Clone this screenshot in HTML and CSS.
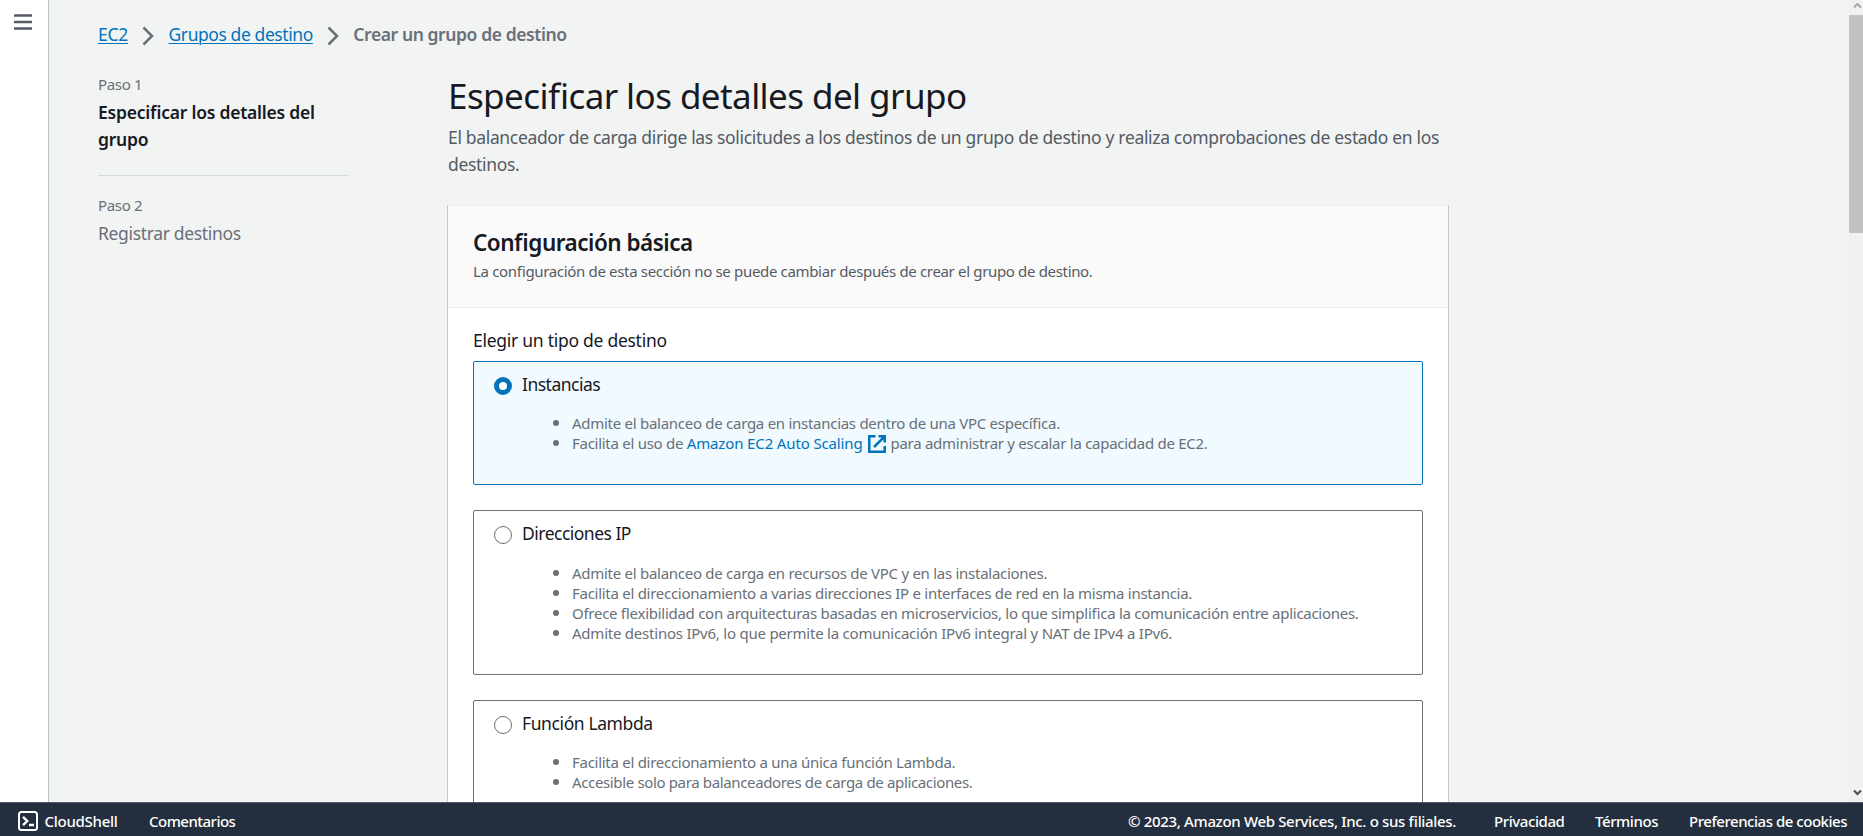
FILE: index.html
```html
<!DOCTYPE html>
<html lang="es">
<head>
<meta charset="utf-8">
<title>Crear un grupo de destino</title>
<link rel="stylesheet" href="styles.css">
</head>
<body>
<div class="workspace">
  <aside class="rail">
    <svg class="menu-icon" width="18" height="16" viewBox="0 0 18 16"><path d="M0 1.5h18M0 8h18M0 14.5h18" stroke="#545b64" stroke-width="2.3"/></svg>
  </aside>
  <main class="content">
    <nav class="breadcrumb">
      <a class="crumb-ec2" href="#">EC2</a>
      <svg class="chevron" width="12" height="20" viewBox="0 0 12 20"><path d="M1.5 1.5L10 10L1.5 18.5" fill="none" stroke="#687078" stroke-width="2.5"/></svg>
      <a class="crumb-groups" href="#">Grupos de destino</a>
      <svg class="chevron" width="12" height="20" viewBox="0 0 12 20"><path d="M1.5 1.5L10 10L1.5 18.5" fill="none" stroke="#687078" stroke-width="2.5"/></svg>
      <span class="current">Crear un grupo de destino</span>
    </nav>
    <div class="wizard">
      <ol class="steps">
        <li class="step active"><small>Paso 1</small><span>Especificar los detalles del grupo</span></li>
        <li class="step"><small>Paso 2</small><span>Registrar destinos</span></li>
      </ol>
      <section class="form">
        <h1>Especificar los detalles del grupo</h1>
        <p class="lead">El balanceador de carga dirige las solicitudes a los destinos de un grupo de destino y realiza comprobaciones de estado en los destinos.</p>
        <div class="card">
          <header class="card-header">
            <h2>Configuración básica</h2>
            <p>La configuración de esta sección no se puede cambiar después de crear el grupo de destino.</p>
          </header>
          <div class="card-body">
            <div class="field-label">Elegir un tipo de destino</div>
            <div class="tiles">
              <div class="tile selected">
                <div class="tile-label"><i class="radio"></i><span class="name-instances">Instancias</span></div>
                <ul>
                  <li>Admite el balanceo de carga en instancias dentro de una VPC específica.</li>
                  <li>Facilita el uso de <a href="#">Amazon EC2 Auto Scaling<svg class="external" width="18" height="18" viewBox="0 0 18 18" fill="none" stroke="#0073bb" stroke-width="2.5"><path d="M7.5 1.3H1.3V16.7H16.7V11"/><path d="M10.5 1.3H16.7V7.5M16.2 1.8L6 12"/></svg></a>para administrar y escalar la capacidad de EC2.</li>
                </ul>
              </div>
              <div class="tile tile-ip">
                <div class="tile-label"><i class="radio"></i><span class="name-ip">Direcciones IP</span></div>
                <ul>
                  <li>Admite el balanceo de carga en recursos de VPC y en las instalaciones.</li>
                  <li>Facilita el direccionamiento a varias direcciones IP e interfaces de red en la misma instancia.</li>
                  <li>Ofrece flexibilidad con arquitecturas basadas en microservicios, lo que simplifica la comunicación entre aplicaciones.</li>
                  <li class="wide">Admite destinos IPv6, lo que permite la comunicación IPv6 integral y NAT de IPv4 a IPv6.</li>
                </ul>
              </div>
              <div class="tile">
                <div class="tile-label"><i class="radio"></i><span class="name-lambda">Función Lambda</span></div>
                <ul>
                  <li>Facilita el direccionamiento a una única función Lambda.</li>
                  <li class="tight">Accesible solo para balanceadores de carga de aplicaciones.</li>
                </ul>
              </div>
            </div>
          </div>
        </div>
      </section>
    </div>
  </main>
  <div class="scrollbar">
    <svg class="arrow" width="14" height="15" viewBox="0 0 14 15"><path d="M5 7.5L8.5 4L12 7.5" fill="none" stroke="#a8a8a8" stroke-width="2"/></svg>
    <div class="thumb"></div>
    <svg class="arrow" width="14" height="15" viewBox="0 0 14 15"><path d="M5 3.5L8.5 7L12 3.5" fill="none" stroke="#505050" stroke-width="2.2"/></svg>
  </div>
</div>
<footer class="footer">
  <svg class="shell" width="20" height="20" viewBox="0 0 20 20" fill="none" stroke="#fff" stroke-width="2"><rect x="1" y="1" width="18" height="18" rx="2.5"/><path d="M5 5.8L9.2 10L5 14.2M11 14h5" stroke-width="2.4"/></svg>
  <span class="f-shell">CloudShell</span>
  <span class="f-feedback">Comentarios</span>
  <span class="f-copy">© 2023, Amazon Web Services, Inc. o sus filiales.</span>
  <span class="f-privacy">Privacidad</span>
  <span class="f-terms">Términos</span>
  <span class="f-cookies">Preferencias de cookies</span>
</footer>
</body>
</html>
```
FILE: styles.css
```css
* { box-sizing: border-box; }

body {
  margin: 0;
  height: 836px;
  overflow: hidden;
  display: flex;
  flex-direction: column;
  font: 400 17.5px/27.5px "Noto Sans", sans-serif;
  font-feature-settings: "liga" 1;
  letter-spacing: -0.335px;
  color: #16191f;
  background: #f2f3f3;
}

h1, h2, p, ul, ol { margin: 0; padding: 0; }

a { color: #0073bb; text-decoration: none; }

.workspace { flex: 1; min-height: 0; display: flex; overflow: hidden; }

.rail {
  flex: none;
  width: 49px;
  padding: 14px 0 0 14px;
  background: #fff;
  border-right: 1px solid #bcc1c5;
}
.menu-icon { display: block; }

.content { flex: 1; padding: 20.5px 0 0 49px; }

.breadcrumb { display: flex; align-items: flex-start; height: 53px; white-space: nowrap; }
.breadcrumb a { text-decoration: underline; text-underline-offset: 1.5px; text-decoration-thickness: 1px; }
.chevron { flex: none; margin: 5px 14.5px 0 14px; }
.crumb-ec2 { width: 30px; letter-spacing: -0.27px; }
.crumb-groups { letter-spacing: -0.42px; }
.current { font-weight: 600; color: #687078; letter-spacing: -0.41px; }

.wizard { display: flex; gap: 98px; }

.steps { width: 251px; list-style: none; }
.step { color: #687078; }
.step small { display: block; font-size: 15px; line-height: 20px; margin-bottom: 4.5px; }
.step span { display: block; }
.step.active { height: 102px; margin-bottom: 19.5px; border-bottom: 1px solid #d5dbdb; }
.step.active small { margin-bottom: 5px; }
.step.active span { color: #16191f; font-weight: 600; letter-spacing: -0.23px; line-height: 27px; }

.form { width: 1002px; }
h1 { margin-top: -1px; padding-left: 1px; font-size: 35px; line-height: 45px; font-weight: 400; letter-spacing: -0.57px; white-space: nowrap; }
.lead { margin: 6px 0 26.5px; padding: 0 0 0 1px; width: 1001px; color: #545b64; }

.card {
  background: #fff;
  border: 1px solid #c4c8c9;
  border-top-color: #eaeded;
  height: 700px;
}
.card-header { height: 102px; padding: 22.5px 25px 0; background: #fafafa; border-bottom: 1px solid #eaeded; }
h2 { font-size: 22.5px; line-height: 27.5px; font-weight: 600; letter-spacing: -0.5px; }
.card-header p { margin-top: 5px; font-size: 15px; line-height: 20px; color: #545b64; }

.card-body { padding: 18.5px 25px; }
.field-label { letter-spacing: -0.27px; margin-bottom: 7px; }

.tiles { display: flex; flex-direction: column; gap: 25px; }
.tile { border: 1px solid #687078; border-radius: 2px; padding: 9px 20px 31px; }
.tile.selected { border-color: #0073bb; background: #f1faff; padding-bottom: 31px; }
.tile-label { display: flex; align-items: flex-start; gap: 10px; height: 41.5px; }
.tile-ip .tile-label { height: 43.5px; }
.radio { width: 18px; height: 18px; margin-top: 6px; border: 1.5px solid #687078; border-radius: 50%; background: #fff; }
.selected .radio { border: 5.5px solid #0073bb; }
.name-instances, .name-ip { letter-spacing: -0.51px; }
.name-lambda { letter-spacing: -0.4px; }

.tile ul { padding-left: 78px; font-size: 15px; line-height: 20px; letter-spacing: -0.275px; color: #687078; }
.tile li { height: 20px; white-space: nowrap; }
.tile li::marker { font-size: 17px; }
.tile .wide { letter-spacing: -0.23px; }
.tile .tight { letter-spacing: -0.355px; }
.tile li a { letter-spacing: -0.14px; }
.external { margin: 0 5px; vertical-align: -4px; }

.scrollbar { flex: none; width: 14px; display: flex; flex-direction: column; background: #f1f1f1; }
.arrow { flex: none; }
.thumb { height: 218px; margin-bottom: auto; background: #c1c1c1; }

.footer {
  flex: none;
  height: 34px;
  padding: 0 16px 0 18px;
  display: flex;
  align-items: center;
  border-top: 1px solid #545b64;
  background: #232f3e;
  color: #fff;
  font-size: 15px;
  line-height: 20px;
  font-weight: 500;
  white-space: nowrap;
}
.shell { margin: 3px 6.5px 0 0; }
.footer span { margin-top: 2px; }
.f-shell { width: 73px; margin-right: 31.5px; letter-spacing: -0.28px; }
.f-feedback { margin-right: auto; letter-spacing: -0.52px; }
.f-copy { width: 328px; margin-right: 38px; }
.f-privacy { width: 69px; margin-right: 32px; letter-spacing: -0.42px; }
.f-terms { width: 63px; margin-right: 31px; letter-spacing: -0.42px; }
.f-cookies { width: 158px; letter-spacing: -0.47px; }
```
